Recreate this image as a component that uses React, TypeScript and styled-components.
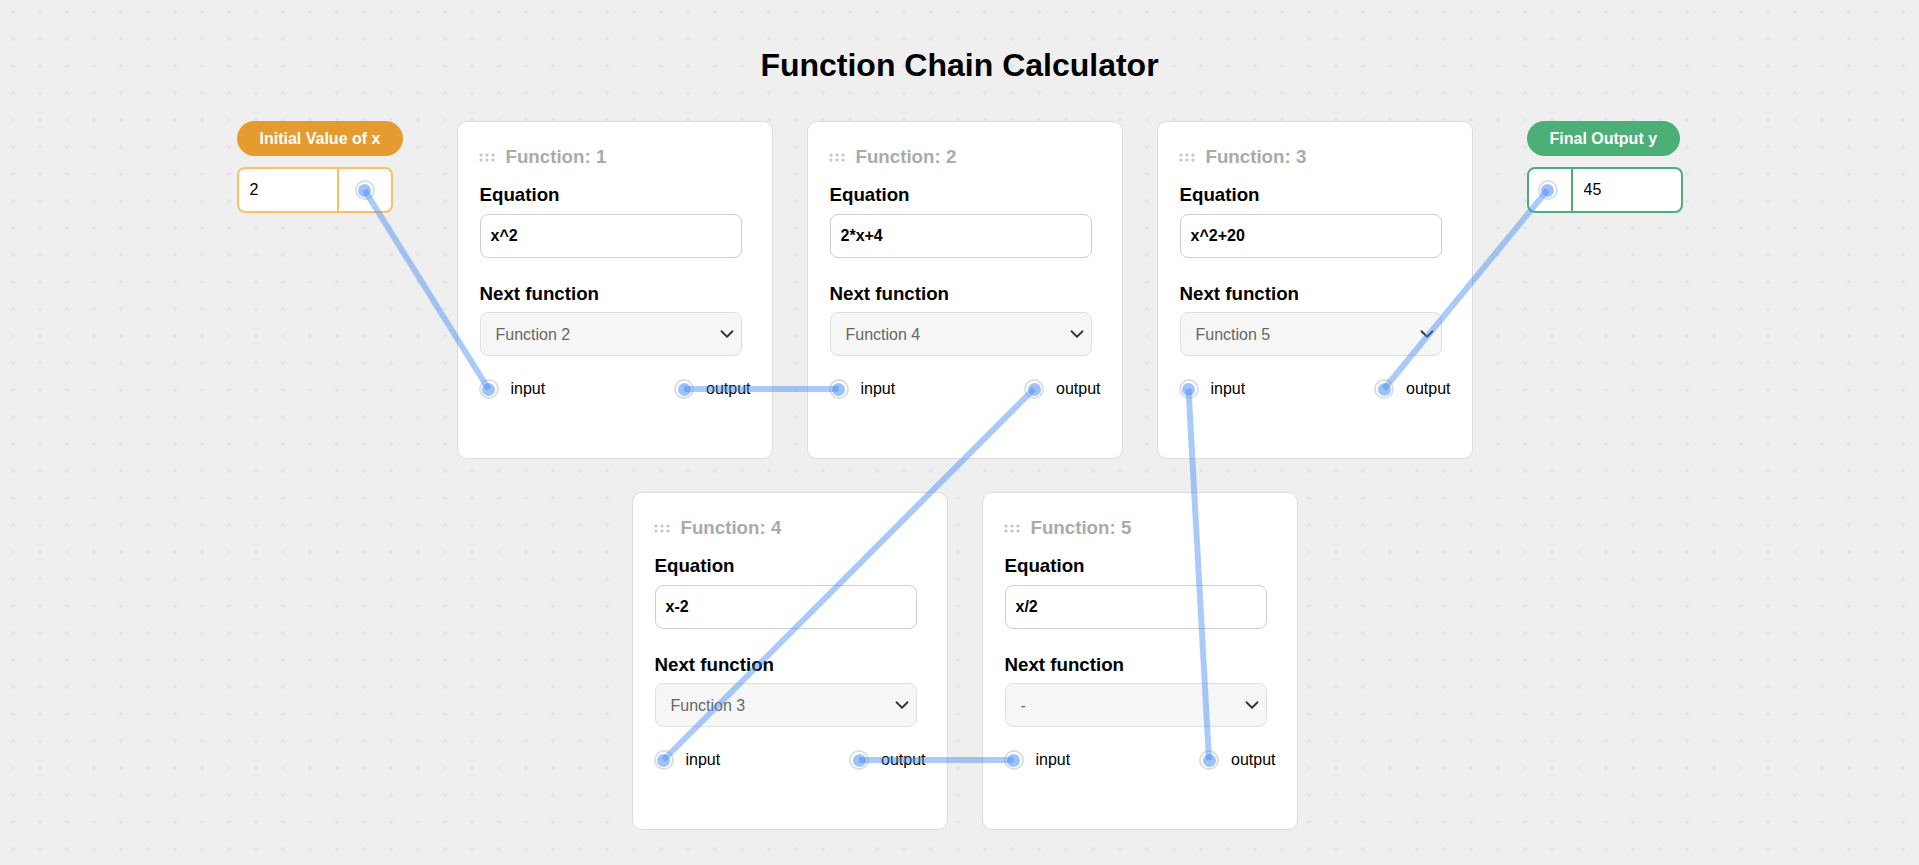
import React, { useLayoutEffect, useRef, useState } from 'react';
import styled, { createGlobalStyle } from 'styled-components';
import { ChevronDown } from 'lucide-react';

const GlobalStyle = createGlobalStyle`
  html, body { margin: 0; padding: 0; }
  body {
    font-family: "Liberation Sans", Arial, sans-serif;
    background-color: #efefef;
    background-image: radial-gradient(circle, #dce3ef 1.6px, transparent 2.2px);
    background-size: 27px 27px;
    background-position: -0.5px -1.5px;
  }
`;

const Page = styled.div`
  position: relative;
  min-height: 100vh;
  box-sizing: border-box;
  padding-top: 47px;
`;

const Title = styled.h1`
  margin: 0;
  font-size: 32px;
  line-height: 37px;
  font-weight: bold;
  text-align: center;
  color: #000;
`;

const MainRow = styled.div`
  display: flex;
  justify-content: center;
  align-items: flex-start;
  margin-top: 37px;
`;

const IoColumn = styled.div<{ $w: number; $gap: number; $side: 'left' | 'right' }>`
  width: ${(p) => p.$w}px;
  margin-${(p) => p.$side}: ${(p) => p.$gap}px;
  display: flex;
  flex-direction: column;
  align-items: flex-start;
  gap: 11px;
`;

const Pill = styled.div<{ $bg: string }>`
  height: 35px;
  border-radius: 18px;
  padding: 0 23px;
  display: flex;
  align-items: center;
  justify-content: center;
  background: ${(p) => p.$bg};
  color: #fff;
  font-size: 16px;
  font-weight: bold;
  white-space: nowrap;
`;

const IoBox = styled.div<{ $border: string }>`
  display: flex;
  width: 156px;
  height: 46px;
  box-sizing: border-box;
  border: 2px solid ${(p) => p.$border};
  border-radius: 8px;
  background: #fff;
  overflow: hidden;
`;

const ValueInput = styled.input<{ $w: number }>`
  width: ${(p) => p.$w}px;
  box-sizing: border-box;
  border: none;
  outline: none;
  padding: 0 0 0 11px;
  font-family: inherit;
  font-size: 16px;
  color: #000;
  background: transparent;
`;

const HandleCell = styled.div<{ $w: number; $border: string; $side: 'left' | 'right'; $shift: number }>`
  width: ${(p) => p.$w}px;
  box-sizing: border-box;
  display: flex;
  align-items: center;
  justify-content: center;
  padding-right: ${(p) => p.$shift}px;
  border-${(p) => p.$side}: 2px solid ${(p) => p.$border};
`;

const Ring = styled.span`
  width: 20px;
  height: 20px;
  box-sizing: border-box;
  border-radius: 50%;
  border: 2px solid #dcdde2;
  background: #fff;
  display: flex;
  align-items: center;
  justify-content: center;
  flex-shrink: 0;
  &::after {
    content: '';
    width: 13px;
    height: 13px;
    border-radius: 50%;
    background: #9dc2fa;
  }
`;

const CardsWrap = styled.div`
  width: 1016px;
  display: flex;
  flex-wrap: wrap;
  justify-content: center;
  column-gap: 34px;
  row-gap: 33px;
`;

const Card = styled.div`
  width: 316px;
  height: 338px;
  box-sizing: border-box;
  background: #fff;
  border: 1px solid #dcdcdc;
  border-radius: 10px;
  padding: 24px 20px 0 22px;
`;

const CardHeader = styled.div`
  display: flex;
  align-items: center;
  gap: 11px;
  height: 22px;
  margin-left: -1px;
  color: #aaa;
  font-size: 18.72px;
  font-weight: bold;
`;

const FieldLabel = styled.div<{ $mt: number }>`
  margin-top: ${(p) => p.$mt}px;
  line-height: 22px;
  font-size: 18.72px;
  font-weight: bold;
  color: #000;
`;

const EquationInput = styled.input`
  display: block;
  margin-top: 8px;
  width: 262px;
  height: 44px;
  box-sizing: border-box;
  border: 1px solid #cdcdd3;
  border-radius: 8px;
  padding: 0 10px;
  font-family: inherit;
  font-size: 16px;
  font-weight: bold;
  color: #000;
  outline: none;
`;

const SelectWrap = styled.div`
  position: relative;
  margin-top: 7px;
  width: 262px;
  height: 44px;
  svg {
    position: absolute;
    right: 4px;
    top: 50%;
    transform: translateY(-50%);
    pointer-events: none;
  }
`;

const NextSelect = styled.select`
  display: block;
  appearance: none;
  -webkit-appearance: none;
  width: 100%;
  height: 100%;
  box-sizing: border-box;
  border: 1px solid #e0e0e0;
  border-radius: 8px;
  padding: 0 30px 0 15px;
  background-color: #f6f6f6;
  font-family: inherit;
  font-size: 16px;
  color: #666;
  outline: none;
`;

const PortRow = styled.div`
  margin-top: 23px;
  margin-left: -1px;
  width: 272px;
  height: 20px;
  display: flex;
  justify-content: space-between;
  align-items: center;
`;

const Port = styled.div`
  display: flex;
  align-items: center;
  gap: 12px;
  font-size: 16px;
  color: #000;
`;

const Overlay = styled.svg`
  position: absolute;
  left: 0;
  top: 0;
  width: 100%;
  height: 100%;
  pointer-events: none;
  z-index: 5;
`;

const Grip = () => (
  <svg width="16" height="9" viewBox="0 0 16 9">
    {[2, 8, 14].map((cx) =>
      [2, 7].map((cy) => <circle key={`${cx}-${cy}`} cx={cx} cy={cy} r="1.6" fill="#c6c6c6" />)
    )}
  </svg>
);

type Fn = { id: number; eq: string; next: string };

const functions: Fn[] = [
  { id: 1, eq: 'x^2', next: 'Function 2' },
  { id: 2, eq: '2*x+4', next: 'Function 4' },
  { id: 3, eq: 'x^2+20', next: 'Function 5' },
  { id: 4, eq: 'x-2', next: 'Function 3' },
  { id: 5, eq: 'x/2', next: '-' },
];

const edges: [string, string][] = [
  ['init-out', 'f1-in'],
  ['f1-out', 'f2-in'],
  ['f2-out', 'f4-in'],
  ['f4-out', 'f5-in'],
  ['f5-out', 'f3-in'],
  ['f3-out', 'final-in'],
];

type Seg = { x1: number; y1: number; x2: number; y2: number };

const FunctionCard = ({ fn }: { fn: Fn }) => (
  <Card>
    <CardHeader>
      <Grip />
      <span>Function: {fn.id}</span>
    </CardHeader>
    <FieldLabel $mt={16}>Equation</FieldLabel>
    <EquationInput defaultValue={fn.eq} />
    <FieldLabel $mt={25}>Next function</FieldLabel>
    <SelectWrap>
      <NextSelect defaultValue={fn.next}>
        <option value="-">-</option>
        {functions
          .filter((f) => f.id !== fn.id)
          .map((f) => (
            <option key={f.id} value={`Function ${f.id}`}>
              Function {f.id}
            </option>
          ))}
      </NextSelect>
      <ChevronDown size={22} strokeWidth={2} color="#333" />
    </SelectWrap>
    <PortRow>
      <Port>
        <Ring data-port={`f${fn.id}-in`} />
        <span>input</span>
      </Port>
      <Port>
        <Ring data-port={`f${fn.id}-out`} />
        <span>output</span>
      </Port>
    </PortRow>
  </Card>
);

export default function App() {
  const pageRef = useRef<HTMLDivElement>(null);
  const [segs, setSegs] = useState<Seg[]>([]);

  useLayoutEffect(() => {
    const measure = () => {
      const page = pageRef.current;
      if (!page) return;
      const base = page.getBoundingClientRect();
      const center = (name: string) => {
        const el = page.querySelector(`[data-port="${name}"]`);
        if (!el) return { x: 0, y: 0 };
        const r = el.getBoundingClientRect();
        return { x: r.left + r.width / 2 - base.left, y: r.top + r.height / 2 - base.top };
      };
      setSegs(
        edges.map(([a, b]) => {
          const p = center(a);
          const q = center(b);
          return { x1: p.x, y1: p.y, x2: q.x, y2: q.y };
        })
      );
    };
    measure();
    window.addEventListener('resize', measure);
    return () => window.removeEventListener('resize', measure);
  }, []);

  return (
    <Page ref={pageRef}>
      <GlobalStyle />
      <Title>Function Chain Calculator</Title>
      <MainRow>
        <IoColumn $w={166} $gap={54} $side="right">
          <Pill $bg="#e49b2f">Initial Value of x</Pill>
          <IoBox $border="#fdbf63">
            <ValueInput $w={98} defaultValue="2" />
            <HandleCell $w={54} $border="#fdbf63" $side="left" $shift={0}>
              <Ring data-port="init-out" />
            </HandleCell>
          </IoBox>
        </IoColumn>
        <CardsWrap>
          {[1, 2, 3, 4, 5].map((id) => (
            <FunctionCard key={id} fn={functions[id - 1]} />
          ))}
        </CardsWrap>
        <IoColumn $w={156} $gap={54} $side="left">
          <Pill $bg="#4caf78">Final Output y</Pill>
          <IoBox $border="#4caf78">
            <HandleCell $w={44} $border="#4caf78" $side="right" $shift={4}>
              <Ring data-port="final-in" />
            </HandleCell>
            <ValueInput $w={108} defaultValue="45" readOnly />
          </IoBox>
        </IoColumn>
      </MainRow>
      <Overlay>
        {segs.map((s, i) => (
          <line
            key={i}
            x1={s.x1}
            y1={s.y1}
            x2={s.x2}
            y2={s.y2}
            stroke="rgba(66,140,245,0.45)"
            strokeWidth={6}
          />
        ))}
      </Overlay>
    </Page>
  );
}
